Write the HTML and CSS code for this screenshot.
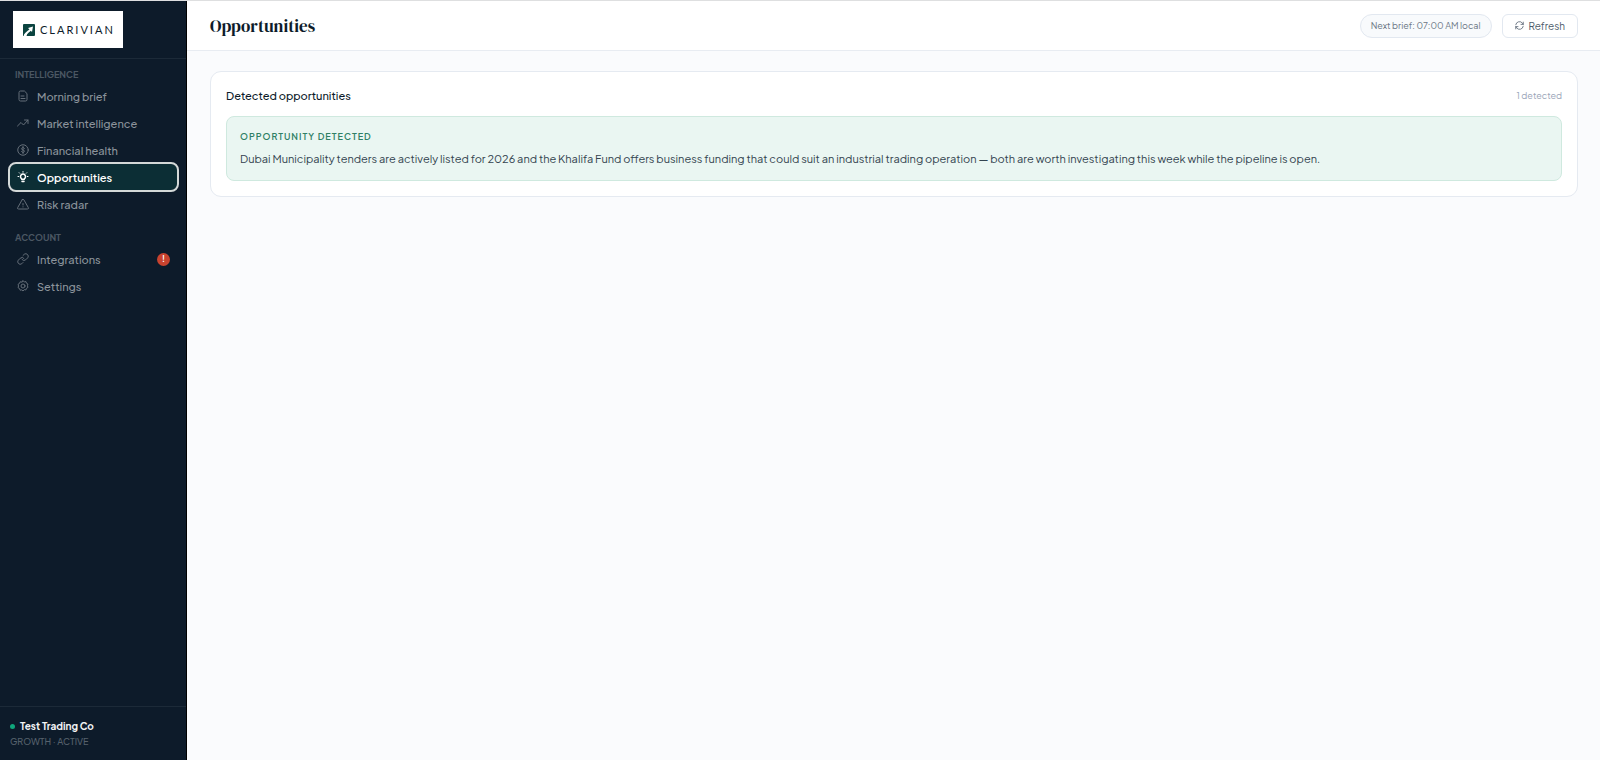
FILE: index.html
```html
<!DOCTYPE html>
<html lang="en">
<head>
    <meta charset="UTF-8">
    <meta name="viewport" content="width=device-width, initial-scale=1.0">
    <title>Clarivian - Opportunities</title>
    <link rel="stylesheet" href="styles.css">
</head>
<body>
    <aside class="sidebar">
        <div class="brand">
            <a class="logo" href="#">
                <svg width="12" height="12" viewBox="0 0 12 12">
                    <rect width="12" height="12" rx="1" fill="#0b4440"/>
                    <path d="M1 10.500C2.500 8 4.500 7 6.500 5.500L5 4l5-1.500L9 8 7.800 6.800C6 8.500 4 9.500 3.500 12H1z" fill="#fff"/>
                </svg>
                <span>CLARIVIAN</span>
            </a>
        </div>

        <nav class="nav">
            <h2 class="nav-title">INTELLIGENCE</h2>
            <a class="nav-item" href="#">
                <svg class="icon" viewBox="0 0 24 24"><path d="M14 2H7a3 3 0 0 0-3 3v14a3 3 0 0 0 3 3h10a3 3 0 0 0 3-3V8zM8 12h6M8 17h8"/></svg>
                Morning brief
            </a>
            <a class="nav-item" href="#">
                <svg class="icon" viewBox="0 0 24 24"><path d="M1 18l7-7 5 5 9-10M15 6h7v7"/></svg>
                Market intelligence
            </a>
            <a class="nav-item" href="#">
                <svg class="icon" viewBox="0 0 24 24"><circle cx="12" cy="12" r="10.5"/><path d="M15 9c-.5-1.200-1.600-1.800-3-1.800-1.800 0-3 .9-3 2.300 0 3.400 6 1.500 6 5 0 1.400-1.200 2.300-3 2.300-1.500 0-2.700-.7-3.100-2M12 5v14"/></svg>
                Financial health
            </a>
            <a class="nav-item active" href="#" aria-current="page">
                <svg class="icon" viewBox="0 0 24 24"><path d="M9.500 17v-1.500a5 5 0 1 1 5 0V17z" stroke-width="3"/><path d="M10 21h4" stroke-width="3"/><path d="M12 1v1.500M2 11h1.500M20.500 11H22M4.500 3.500l1 1M19.500 3.500l-1 1"/></svg>
                Opportunities
            </a>
            <a class="nav-item" href="#">
                <svg class="icon" viewBox="0 0 24 24"><path d="M10.300 3.500L1.500 19a2 2 0 0 0 1.700 3h17.600a2 2 0 0 0 1.700-3L13.700 3.500a2 2 0 0 0-3.400 0zM12 11v3M12 17.500v.5"/></svg>
                Risk radar
            </a>

            <h2 class="nav-title">ACCOUNT</h2>
            <a class="nav-item" href="#">
                <svg class="icon" viewBox="0 0 24 24"><path d="M10 13a5 5 0 0 0 7.500.5l4-4a5 5 0 0 0-7-7L12 5M14 11a5 5 0 0 0-7.500-.5l-4 4a5 5 0 0 0 7 7L12 19"/></svg>
                Integrations
                <span class="alert">!</span>
            </a>
            <a class="nav-item" href="#">
                <svg class="icon" viewBox="0 0 24 24"><path d="M12 1.500l2.500 2.200 3.300-.6 1 3.200 3 1.700-.8 3.500.8 3.500-3 1.700-1 3.200-3.300-.6L12 22l-2.500-2.200-3.300.6-1-3.200-3-1.700.8-3.500-.8-3.500 3-1.700 1-3.200 3.300.6z"/><circle cx="12" cy="12" r="4"/></svg>
                Settings
            </a>
        </nav>

        <div class="account">
            <div class="account-name"><span class="dot"></span>Test Trading Co</div>
            <div class="account-plan">GROWTH · ACTIVE</div>
        </div>
    </aside>

    <main class="main">
        <header class="topbar">
            <h1>Opportunities</h1>
            <div class="actions">
                <span class="pill">Next brief: 07:00 AM local</span>
                <button class="refresh" type="button">
                    <svg width="9" height="9" viewBox="0 0 24 24"><path d="M2 10a10 10 0 0 1 18-4l2 3M22 3v6h-6M22 14a10 10 0 0 1-18 4l-2-3M2 21v-6h6"/></svg>
                    Refresh
                </button>
            </div>
        </header>

        <section class="card">
            <div class="card-head">
                <h2>Detected opportunities</h2>
                <span class="count">1 detected</span>
            </div>
            <div class="opportunity">
                <h3>OPPORTUNITY DETECTED</h3>
                <p>Dubai Municipality tenders are actively listed for 2026 and the Khalifa Fund offers business funding that could suit an industrial trading operation — both are worth investigating this week while the pipeline is open.</p>
            </div>
        </section>
    </main>
</body>
</html>
```
FILE: styles.css
```css
* {
    box-sizing: border-box;
}
body {
    margin: 0;
    display: flex;
    min-height: 100vh;
    border-top: 1px solid #dedfe0;
    background: #fafbfd;
    color: #0d1b2a;
    font-family: "Plus Jakarta Sans", "Open Sans", sans-serif;
    font-size: 11px;
}
h1, h2, h3, p {
    margin: 0;
}
svg {
    flex: none;
    fill: none;
    stroke: currentColor;
    stroke-width: 2;
    stroke-linecap: round;
    stroke-linejoin: round;
}

/* Sidebar */
.sidebar {
    width: 187px;
    flex: none;
    display: flex;
    flex-direction: column;
    background: #0d1b2a;
    border-right: 1px solid #000;
}
.brand {
    padding: 10px 13px;
    border-bottom: 1px solid #1c2a38;
}
.logo {
    display: inline-flex;
    align-items: center;
    gap: 5px;
    height: 37px;
    padding: 0 8px 0 10px;
    background: #fff;
    color: #0d1b2a;
    font-family: "Lato", sans-serif;
    font-size: 11px;
    letter-spacing: 2px;
    text-decoration: none;
    vertical-align: top;
}
.logo svg {
    stroke: none;
}
.nav {
    flex: 1;
    display: flex;
    flex-direction: column;
    gap: 1px;
    padding: 8px 9px 8px 10px;
}
.nav-title {
    padding: 0 5px;
    color: #4b5763;
    font-size: 9px;
    font-weight: 700;
    line-height: 15px;
}
.nav-item + .nav-title {
    margin-top: 12px;
}
.nav-item {
    display: flex;
    align-items: center;
    gap: 8px;
    height: 26px;
    padding: 0 7px;
    border-radius: 6px;
    color: #8b939b;
    font-weight: 500;
    text-decoration: none;
}
.icon {
    width: 12px;
    height: 12px;
    opacity: 0.7;
}
.active {
    background: #0c2e35;
    color: #fff;
    font-weight: 600;
    outline: 2px solid #d4d9d8;
}
.active .icon {
    opacity: 1;
}
.alert {
    width: 13px;
    height: 13px;
    margin-left: auto;
    border-radius: 50%;
    background: #c8432f;
    color: #fff;
    font-size: 8px;
    font-weight: 700;
    line-height: 13px;
    text-align: center;
}
.account {
    padding: 11px 10px 10px;
    border-top: 1px solid #1c2a38;
}
.account-name {
    display: flex;
    align-items: center;
    gap: 5px;
    color: #f3f4f5;
    font-size: 10px;
    font-weight: 700;
    line-height: 16px;
}
.dot {
    width: 5px;
    height: 5px;
    border-radius: 50%;
    background: #0fa67c;
}
.account-plan {
    color: #56616c;
    font-size: 9px;
    font-weight: 500;
    line-height: 16px;
}

/* Content */
.main {
    flex: 1;
    min-width: 0;
}
.topbar {
    display: flex;
    align-items: center;
    justify-content: space-between;
    height: 50px;
    padding: 0 22px 0 23px;
    background: #fff;
    border-bottom: 1px solid #e8ecf2;
}
h1 {
    font-family: "DM Serif Display", "Liberation Serif", serif;
    font-size: 17px;
    font-weight: 400;
}
.actions {
    display: flex;
    gap: 10px;
}
.pill, .refresh {
    display: flex;
    align-items: center;
    height: 24px;
    border: 1px solid #e2e8f0;
}
.pill {
    padding: 0 10px;
    border-radius: 12px;
    background: #f8fafc;
    color: #6b7785;
    font-size: 9px;
}
.refresh {
    gap: 5px;
    padding: 0 12px;
    border-radius: 6px;
    background: #fff;
    color: #4c5a69;
    font-family: inherit;
    font-size: 10px;
    cursor: pointer;
}
.card {
    margin: 20px 22px 20px 23px;
    padding: 15px;
    background: #fff;
    border: 1px solid #e5eaf1;
    border-radius: 11px;
}
.card-head {
    display: flex;
    align-items: center;
    justify-content: space-between;
    margin-bottom: 12px;
    line-height: 17px;
}
.card-head h2 {
    font-size: 11px;
    font-weight: 500;
}
.count {
    color: #9aa5b8;
    font-size: 9px;
}
.opportunity {
    padding: 10px 13px 11px;
    background: #eaf6f2;
    border: 1px solid #cfe9df;
    border-radius: 8px;
}
.opportunity h3 {
    margin-bottom: 3px;
    color: #2f7f65;
    font-size: 9px;
    font-weight: 600;
    line-height: 19px;
    letter-spacing: 1px;
}
.opportunity p {
    color: #33434f;
    font-weight: 400;
    line-height: 20px;
}
```
